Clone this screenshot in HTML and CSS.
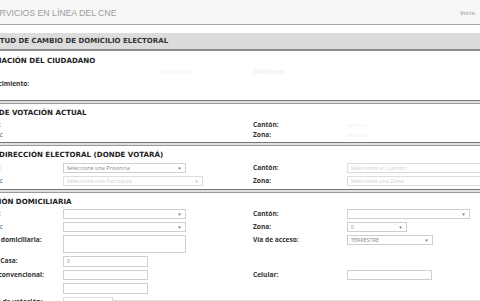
FILE: index.html
```html
<!DOCTYPE html>
<html lang="es">
<head>
<meta charset="utf-8">
<title>Servicios en línea del CNE</title>
<link rel="stylesheet" href="styles.css">
</head>
<body>
<div class="page">
  <header class="topbar">
    <div class="brand">SERVICIOS EN LÍNEA DEL CNE</div>
    <a class="nav" href="#">Inicio</a>
  </header>
  <main class="content">
    <h1 class="title-bar">SOLICITUD DE CAMBIO DE DOMICILIO ELECTORAL</h1>

    <section class="sec sec-info">
      <h2 class="sec-title">INFORMACIÓN DEL CIUDADANO</h2>
      <div class="grid grid-info">
        <span class="lbl">Cédula:</span>
        <span class="val"><span class="faint pad-info">0000000000</span></span>
        <span class="lbl faint">Nombres:</span>
        <span class="val"></span>
        <span class="lbl">Fecha Nacimiento:</span>
        <span class="val"></span>
        <span class="lbl"></span>
        <span class="val"></span>
      </div>
    </section>
    <div class="sep"></div>

    <section class="sec sec-current">
      <h2 class="sec-title">LUGAR DE VOTACIÓN ACTUAL</h2>
      <div class="grid grid-current">
        <span class="lbl">Provincia:</span>
        <span class="val"></span>
        <span class="lbl">Cantón:</span>
        <span class="val"><span class="faint">xxxxxxx</span></span>
        <span class="lbl">Parroquia:</span>
        <span class="val"></span>
        <span class="lbl">Zona:</span>
        <span class="val"><span class="faint">xxxxxxx</span></span>
      </div>
    </section>
    <div class="sep"></div>

    <section class="sec">
      <h2 class="sec-title">NUEVA DIRECCIÓN ELECTORAL (DONDE VOTARÁ)</h2>
      <div class="grid">
        <span class="lbl">Provincia:</span>
        <span class="val"><span class="sel w123"><select><option>Seleccione una Provincia</option></select></span></span>
        <span class="lbl">Cantón:</span>
        <span class="val"><span class="sel w160 dis"><select disabled><option>Seleccione un Cantón</option></select></span></span>
        <span class="lbl">Parroquia:</span>
        <span class="val"><span class="sel w140 dis"><select disabled><option>Seleccione una Parroquia</option></select></span></span>
        <span class="lbl">Zona:</span>
        <span class="val"><span class="sel w160 dis"><select disabled><option>Seleccione una Zona</option></select></span></span>
      </div>
    </section>
    <div class="sep"></div>

    <section class="sec">
      <h2 class="sec-title">DIRECCIÓN DOMICILIARIA</h2>
      <div class="grid grid-home">
        <span class="lbl">Provincia:</span>
        <span class="val"><span class="sel w123"><select><option></option></select></span></span>
        <span class="lbl">Cantón:</span>
        <span class="val"><span class="sel w123"><select><option></option></select></span></span>

        <span class="lbl">Parroquia:</span>
        <span class="val"><span class="sel w123"><select><option></option></select></span></span>
        <span class="lbl">Zona:</span>
        <span class="val"><span class="sel w60"><select><option>0</option></select></span></span>

        <span class="lbl">Dirección domiciliaria:</span>
        <span class="val"><textarea class="ta"></textarea></span>
        <span class="lbl">Vía de acceso:</span>
        <span class="val"><span class="sel w86"><select><option>TERRESTRE</option></select></span></span>

        <span class="lbl lbl-spaced">Número Casa:</span>
        <span class="val"><input class="inp" type="text" value="0"></span>
        <span class="lbl"></span>
        <span class="val"></span>

        <span class="lbl">Teléfono convencional:</span>
        <span class="val"><input class="inp" type="text"></span>
        <span class="lbl">Celular:</span>
        <span class="val"><input class="inp" type="text"></span>

        <span class="lbl">Email:</span>
        <span class="val"><input class="inp" type="text"></span>
        <span class="lbl"></span>
        <span class="val"></span>

        <span class="lbl">Parroquia de votación:</span>
        <span class="val val-span"><span class="sel w50 dis"><select disabled><option></option></select></span><span class="rule"></span></span>
      </div>
    </section>
  </main>
</div>
</body>
</html>
```

FILE: styles.css
```css
* { box-sizing: border-box; }

body {
  margin: 0;
  background: #fff;
  overflow: hidden;
  font-family: "Open Sans", sans-serif;
}

.page {
  margin-left: -40px;
  width: 520px;
}

.topbar {
  height: 25px;
  background: #f7f7f7;
  border-bottom: 1px solid #a8a8a8;
  display: flex;
  align-items: center;
  justify-content: space-between;
  padding: 1px 5px 0 28px;
}

.brand {
  font-family: "Liberation Sans", Arial, sans-serif;
  font-size: 8.7px;
  color: #9b9b9b;
}

.nav {
  font-family: "Open Sans", sans-serif;
  font-size: 6px;
  color: #8a8a8a;
  text-decoration: none;
}

.title-bar {
  margin: 8px 0 0;
  height: 18px;
  background: #dcdcdc;
  border-bottom: 2px solid #8a8a8a;
  padding-left: 14px;
  font: bold 7px/16px "DejaVu Sans", Verdana, sans-serif;
  color: #333;
}

.sec { padding: 4px 0 3px 8px; }
.sec-info { padding: 5px 0 11px 8px; }
.sec-current { padding: 4px 0 2px 8px; }

.sec-title {
  margin: 0;
  padding-left: 1.5px;
  font: bold 7.1px/10px "DejaVu Sans", Verdana, sans-serif;
  color: #222;
}

.grid {
  display: grid;
  grid-template-columns: 94.7px 190.3px 93.7px 1fr;
  row-gap: 3px;
  margin-top: 3px;
  align-items: start;
}
.grid-info { margin-top: 1px; row-gap: 2px; }
.grid-current { margin-top: 2px; row-gap: 0; }
.grid-home { margin-top: 2px; }

.lbl {
  font: bold 6.6px/10px "Open Sans", sans-serif;
  color: #333;
  white-space: nowrap;
}
.lbl-spaced { word-spacing: 3.5px; }

.val {
  min-height: 10px;
  font: 5.5px/10px "Open Sans", sans-serif;
  color: #666;
}

.faint { color: #efefef; }
.pad-info { padding-left: 98px; }

.sep {
  height: 4px;
  border-top: 1px solid #777;
  border-bottom: 1px solid #999;
  background: #e0e0e0;
}

.sel {
  position: relative;
  display: block;
  height: 10px;
}
.sel select {
  appearance: none;
  -webkit-appearance: none;
  display: block;
  width: 100%;
  height: 100%;
  margin: 0;
  padding: 0 0 0 3px;
  border: 1px solid #cfcfcf;
  border-radius: 0;
  background: #fff;
  font: 5.5px "Open Sans", sans-serif;
  color: #8a8a8a;
}
.sel::after {
  content: "▾";
  position: absolute;
  right: 5px;
  top: 0;
  font: 5px/10px "DejaVu Sans", sans-serif;
  color: #777;
  pointer-events: none;
}
.sel.dis select { color: #bbb; }
.sel.dis::after { color: #bbb; }

.w123 { width: 123px; }
.w140 { width: 140px; }
.w160 { width: 160px; }
.w60 { width: 60px; }
.w86 { width: 86px; }
.w50 { width: 50px; }

.inp {
  display: block;
  width: 85px;
  height: 10.5px;
  margin: 0;
  padding: 0 3px;
  border: 1px solid #cfcfcf;
  border-radius: 0;
  font: 5.5px "Open Sans", sans-serif;
  color: #888;
}

.ta {
  display: block;
  width: 123px;
  height: 18px;
  margin: 0;
  padding: 0;
  border: 1px solid #cfcfcf;
  border-radius: 0;
  resize: none;
}

.val-span {
  grid-column: 2 / -1;
  display: flex;
  align-items: flex-start;
}
.rule {
  flex: 1;
  margin-top: 3px;
  border-top: 1px solid #dedede;
}
```
